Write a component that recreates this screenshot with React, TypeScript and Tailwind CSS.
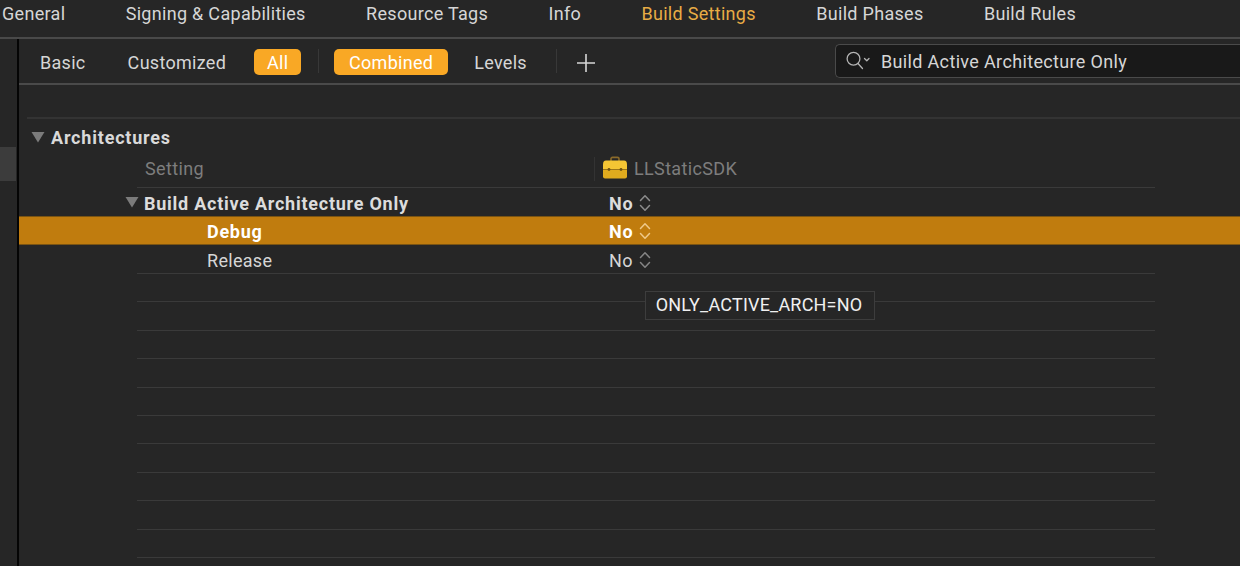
const tabs = ['General', 'Signing & Capabilities', 'Resource Tags', 'Info', 'Build Settings', 'Build Phases', 'Build Rules'];

const Triangle = () => (
    <svg width="14" height="12" viewBox="0 0 14 12" className="shrink-0">
        <path d="M0.5 1 H13.5 L7 11.5 Z" fill="#7b7b7b" />
    </svg>
);

const Stepper = ({ color }: { color: string }) => (
    <svg width="12" height="18" viewBox="0 0 12 18" fill="none" stroke={color} strokeWidth="1.5" strokeLinecap="round" strokeLinejoin="round">
        <path d="M1.5 6.5 L6 1.8 L10.5 6.5" />
        <path d="M1.5 11.5 L6 16.2 L10.5 11.5" />
    </svg>
);

const Toolbox = () => (
    <svg width="26" height="24" viewBox="0 0 26 24" className="block">
        <path d="M9 5 V2.8 Q9 1.4 10.5 1.4 H15.5 Q17 1.4 17 2.8 V5" fill="none" stroke="#8a6a2a" strokeWidth="1.6" />
        <path d="M1 8.5 Q1 4.5 4 4.5 H22 Q25 4.5 25 8.5 V13.5 H1 Z" fill="#f4c534" />
        <path d="M1 13.5 H25 V20.5 Q25 22.5 23 22.5 H3 Q1 22.5 1 20.5 Z" fill="#e0ab1e" />
        <rect x="1" y="13" width="24" height="1" fill="#9a7518" />
        <circle cx="7" cy="13.5" r="1.4" fill="#6e5312" />
        <circle cx="19" cy="13.5" r="1.4" fill="#6e5312" />
    </svg>
);

const SearchIcon = () => (
    <svg width="24" height="20" viewBox="0 0 24 20" fill="none" stroke="#b4b4b4" strokeWidth="1.3" strokeLinecap="round" strokeLinejoin="round" className="shrink-0">
        <circle cx="7.5" cy="7.8" r="6.4" />
        <path d="M12 12.5 L16.5 17.5" />
        <path d="M18.5 7.5 L20.8 9.8 L23 7.5" />
    </svg>
);

const EmptyRow = () => (
    <div className="h-[28.4px] ml-[118px] w-[1018px] border-b border-[#3a3a3a]" />
);

const App = () => {
    return (
        <div className="w-[1240px] h-[566px] overflow-hidden bg-[#262626] text-[#d6d6d6] text-[18px] tracking-[0.3px] font-['Roboto',sans-serif] relative">
            {/* Tabs */}
            <div className="h-[39px] flex items-start pl-[2px] gap-[60.4px] border-b-2 border-[#494949] whitespace-nowrap">
                {tabs.map((tab) => (
                    <span key={tab} className={tab === 'Build Settings' ? 'text-[#e8ac45]' : ''}>{tab}</span>
                ))}
            </div>

            <div className="flex h-[527px]">
                {/* Sidebar strip */}
                <div className="w-[19px] shrink-0 border-r-2 border-[#050505] pt-[108px]">
                    <div className="h-[34px] w-[16px] bg-[#3c3c3c]" />
                </div>

                <div className="flex-1 min-w-0">
                    {/* Filter bar */}
                    <div className="h-[46px] flex items-center border-b-2 border-[#4a4a4a] pl-[21px] whitespace-nowrap">
                        <span className="pt-[2px] shrink-0">Basic</span>
                        <span className="ml-[42px] pt-[2px] shrink-0">Customized</span>
                        <span className="ml-[28px] mt-[2px] w-[47px] h-[26px] shrink-0 rounded-[5px] bg-[#f9a825] text-white flex items-center justify-center">All</span>
                        <span className="ml-[17px] w-px h-[24px] shrink-0 bg-[#383838]" />
                        <span className="ml-[15px] mt-[2px] w-[114px] h-[26px] shrink-0 rounded-[5px] bg-[#f9a825] text-white flex items-center justify-center">Combined</span>
                        <span className="ml-[26px] pt-[2px] shrink-0">Levels</span>
                        <span className="ml-[29px] w-px h-[24px] shrink-0 bg-[#383838]" />
                        <svg width="18" height="18" viewBox="0 0 18 18" className="ml-[20px] mt-[3px] shrink-0" stroke="#d6d6d6" strokeWidth="1.6">
                            <path d="M9 0 V18 M0 9 H18" />
                        </svg>
                        <div className="ml-[240px] flex-1 min-w-0 h-[34px] flex items-center gap-[11px] pl-[10px] rounded-l-[5px] border border-r-0 border-[#4a4a4a] bg-[#191919] tracking-[0.35px]">
                            <SearchIcon />
                            <span>Build Active Architecture Only</span>
                        </div>
                    </div>

                    {/* Settings list */}
                    <div className="h-[34px] ml-[8px] border-b-2 border-[#333333]" />
                    <div className="h-[36px] ml-[12px] flex items-center gap-[6px] font-bold tracking-[0.8px] text-[#d9d9d9]">
                        <Triangle />
                        <span>Architectures</span>
                    </div>
                    <div className="h-[33px] ml-[118px] w-[1018px] border-b border-[#3a3a3a] flex items-center text-[#7d7d7d] tracking-[0.35px]">
                        <span className="ml-[8px] w-[449px] pb-[5px]">Setting</span>
                        <span className="w-px h-[24px] bg-[#333333] mb-[4px]" />
                        <span className="ml-[7px] mb-[6px]"><Toolbox /></span>
                        <span className="ml-[6px] pb-[5px]">LLStaticSDK</span>
                    </div>
                    <div className="h-[28px] flex items-center font-bold tracking-[0.75px] text-[#dcdcdc] whitespace-nowrap">
                        <span className="ml-[106px]"><Triangle /></span>
                        <span className="ml-[5px] w-[465px] pt-[2px]">Build Active Architecture Only</span>
                        <span className="pt-[2px]">No</span>
                        <span className="ml-[6px] mt-[2px]"><Stepper color="#8c8c8c" /></span>
                    </div>
                    <div className="h-[29px] flex items-center font-bold tracking-[0.7px] text-white bg-[#c07c0e] border-y border-[#7a5413]">
                        <span className="ml-[188px] w-[402px] pt-[1px]">Debug</span>
                        <span className="pt-[1px]">No</span>
                        <span className="ml-[6px] mt-[1px]"><Stepper color="#efc98a" /></span>
                    </div>
                    <div className="h-[29px] ml-[118px] w-[1018px] border-b border-[#3a3a3a] flex items-center">
                        <span className="ml-[70px] w-[402px] pt-[2px]">Release</span>
                        <span className="pt-[2px]">No</span>
                        <span className="ml-[6px] mt-[1px]"><Stepper color="#858585" /></span>
                    </div>
                    {Array.from({ length: 11 }).map((_, i) => (
                        <EmptyRow key={i} />
                    ))}
                </div>
            </div>

            {/* Tooltip */}
            <div className="absolute left-[645px] top-[291px] w-[230px] h-[29px] flex items-center justify-center pb-[2px] pr-[2px] bg-[#262626] border border-[#3d3d3d] text-[#f0f0f0] tracking-[0.2px] whitespace-nowrap">
                ONLY_ACTIVE_ARCH=NO
            </div>
        </div>
    );
};

export default App;
